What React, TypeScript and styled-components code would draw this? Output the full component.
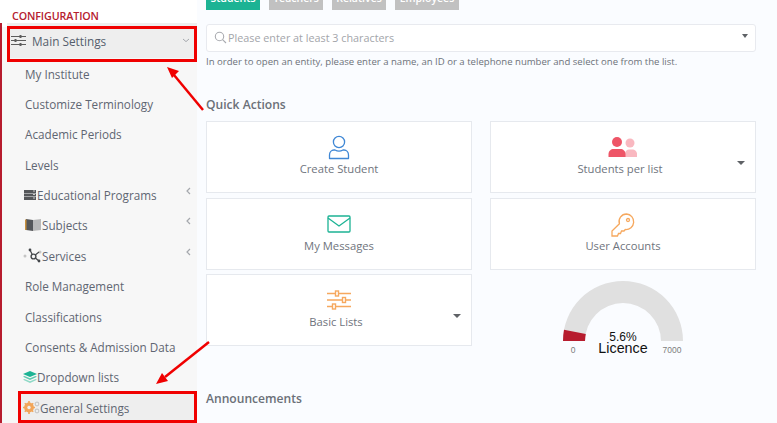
import React from "react";
import styled, { createGlobalStyle } from "styled-components";

const Global = createGlobalStyle`
  html, body { margin: 0; padding: 0; width: 777px; height: 423px; overflow: hidden; background: #fafbff; }
  #root { width: 777px; height: 423px; }
  * { box-sizing: border-box; }
`;

const Page = styled.div`
  position: relative;
  display: flex;
  width: 777px;
  height: 423px;
  overflow: hidden;
  font-family: "Open Sans", sans-serif;
  background: #fafcff;
`;

const Sidebar = styled.aside`
  width: 197px;
  flex: none;
  display: flex;
  flex-direction: column;
  background: linear-gradient(#fff 0, #fff 27px, #f7f7f7 27px);
`;

const SectionTitle = styled.div`
  height: 27px;
  padding: 9px 0 0 12px;
  font-size: 10.7px;
  line-height: 14px;
  font-weight: 600;
  color: #b5202f;
  background: #fff;
  letter-spacing: -0.1px;
`;

const Menu = styled.nav`
  flex: 1;
  border-left: 2px solid #b71c2e;
  display: flex;
  flex-direction: column;
`;

const MainItem = styled.div`
  height: 35px;
  margin-left: 5px;
  display: flex;
  align-items: center;
  padding: 0 7px 0 4px;
  gap: 6px;
  background: #eeeeee;
  color: #555e6c;
  font-size: 11.8px;
`;

const Item = styled.div<{ $indent?: number; $active?: boolean }>`
  height: 30.4px;
  flex: none;
  display: flex;
  align-items: center;
  padding-left: ${(p) => p.$indent ?? 23}px;
  padding-right: 6px;
  font-size: 11.7px;
  color: #5f6672;
  background: ${(p) => (p.$active ? "#eeeeee" : "transparent")};
  margin-left: ${(p) => (p.$active ? 16 : 0)}px;
`;

const Label = styled.span`
  flex: 1;
  white-space: nowrap;
`;

const Chevron = styled.svg`
  flex: none;
  margin-top: -8px;
`;

const Main = styled.main`
  flex: 1;
  padding: 0 21px 0 9px;
  margin-top: -10px;
  display: flex;
  flex-direction: column;
`;

const Tabs = styled.div`
  display: flex;
  height: 20px;
  gap: 9px;
`;

const Tab = styled.div<{ $on?: boolean; $w: number }>`
  width: ${(p) => p.$w}px;
  height: 20px;
  background: ${(p) => (p.$on ? "#1cb394" : "#c1c1c1")};
  color: #fff;
  font-size: 10.5px;
  font-weight: 600;
  text-align: center;
  line-height: 17px;
`;

const SearchBox = styled.div`
  margin-top: 14px;
  height: 28px;
  background: #fff;
  border: 1px solid #e8eaef;
  border-radius: 3px;
  display: flex;
  align-items: center;
  padding: 0 4px 2px 7px;
  gap: 1px;
  font-size: 10.8px;
  color: #a3a5aa;
`;

const Help = styled.div`
  margin-top: 3px;
  font-size: 9.58px;
  line-height: 14px;
  color: #6d727a;
`;

const Heading = styled.h2<{ $top: number }>`
  margin: ${(p) => p.$top}px 0 0;
  font-size: 12.1px;
  line-height: 17px;
  font-weight: 600;
  color: #6b7078;
`;

const Grid = styled.div`
  margin-top: 8px;
  display: grid;
  grid-template-columns: 266px 266px;
  grid-auto-rows: 72px;
  column-gap: 18px;
  row-gap: 4.5px;
`;

const Card = styled.div`
  position: relative;
  background: #fff;
  border: 1px solid #e6e9ee;
  display: flex;
  flex-direction: column;
  align-items: center;
  padding-top: 12px;
  font-size: 11.25px;
  line-height: 15px;
  color: #6f747d;
`;

const IconSlot = styled.div<{ $drop?: number }>`
  height: 26px;
  display: flex;
  align-items: center;
  justify-content: center;
  margin-bottom: 1px;
  padding-top: ${(p) => p.$drop ?? 0}px;
`;

const CardCaption = styled.span<{ $shift?: number }>`
  transform: translateX(${(p) => p.$shift ?? 0}px);
`;

const Caret = styled.span`
  position: absolute;
  right: 10px;
  top: 39px;
  width: 0;
  height: 0;
  border-left: 4px solid transparent;
  border-right: 4px solid transparent;
  border-top: 4px solid #5f6266;
`;

const SearchCaret = styled(Caret)`
  position: static;
  margin-left: auto;
  margin-right: 3px;
  margin-bottom: 3px;
  border-left-width: 3.5px;
  border-right-width: 3.5px;
`;

const GaugeCell = styled.div`
  display: flex;
  justify-content: center;
  position: relative;
  height: 72px;
`;

const RedFrame = styled.div<{ $l: number; $t: number; $w: number; $h: number }>`
  position: absolute;
  left: ${(p) => p.$l}px;
  top: ${(p) => p.$t}px;
  width: ${(p) => p.$w}px;
  height: ${(p) => p.$h}px;
  border: 3px solid #f00000;
  pointer-events: none;
`;

const Overlay = styled.svg`
  position: absolute;
  left: 0;
  top: 0;
  pointer-events: none;
`;

const ChevronLeft = () => (
  <Chevron width="5" height="8" viewBox="0 0 5 8" fill="none" stroke="#a5a8ad" strokeWidth="1.2">
    <path d="M4 1L1 4l3 3" />
  </Chevron>
);

const App = () => (
  <Page>
    <Global />
    <Sidebar>
      <SectionTitle>CONFIGURATION</SectionTitle>
      <Menu>
        <MainItem>
          <svg width="15" height="13" viewBox="0 0 15 13" fill="none" stroke="#5c5c5c" strokeWidth="1">
            <path d="M0 2.5h15M0 6.5h15M0 10.5h15" />
            <path d="M9.5 1v3M4.5 5v3M9.5 9v3" strokeWidth="2" />
          </svg>
          <Label>Main Settings</Label>
          <svg width="8" height="5" viewBox="0 0 8 5" fill="none" stroke="#a5a8ad" strokeWidth="1">
            <path d="M1 1l3 2.6L7 1" />
          </svg>
        </MainItem>
        <Item>My Institute</Item>
        <Item>Customize Terminology</Item>
        <Item>Academic Periods</Item>
        <Item>Levels</Item>
        <Item $indent={21}>
          <svg width="14" height="12" viewBox="0 0 14 12">
            <path d="M1 1h12v3H1zM1 4.5h12v3H1zM1 8h12v3H1z" fill="#55575a" />
            <path d="M10 2h2M10 5.5h2M10 9h2" stroke="#ccc" strokeWidth="1" />
          </svg>
          <Label>Educational Programs</Label>
          <ChevronLeft />
        </Item>
        <Item $indent={22}>
          <svg width="18" height="14" viewBox="0 0 18 14">
            <path d="M2 1l7 1v11l-7-1z" fill="#55575a" />
            <path d="M1 1.5h1.5V12H1z" fill="#c9913e" />
            <path d="M9 2l8-1v11l-8 1z" fill="#b9b9b9" />
          </svg>
          <Label>Subjects</Label>
          <ChevronLeft />
        </Item>
        <Item $indent={21}>
          <svg width="19" height="15" viewBox="0 0 19 15" fill="none">
            <circle cx="2" cy="8" r="1.5" fill="#c5c5c5" />
            <circle cx="17" cy="4" r="1.5" fill="#c5c5c5" />
            <path d="M7 2l3 6 6 5M11 8l5-4" stroke="#44474b" strokeWidth="1.2" />
            <circle cx="7" cy="2" r="1.4" fill="#44474b" />
            <circle cx="10.5" cy="8.5" r="2.4" fill="#f7f7f7" stroke="#44474b" strokeWidth="1.4" />
            <circle cx="16" cy="13" r="1.4" fill="#44474b" />
          </svg>
          <Label>Services</Label>
          <ChevronLeft />
        </Item>
        <Item>Role Management</Item>
        <Item>Classifications</Item>
        <Item>Consents &amp; Admission Data</Item>
        <Item $indent={21}>
          <svg width="14" height="12" viewBox="0 0 14 12">
            <path d="M7 0l7 3-7 3-7-3z" fill="#1cb394" />
            <path d="M1.5 5L7 7.3 12.5 5 14 5.8 7 9 0 5.8z" fill="#5cc8ae" />
            <path d="M1.5 8L7 10.2 12.5 8 14 8.8 7 12 0 8.8z" fill="#8ed9c6" />
          </svg>
          <Label>Dropdown lists</Label>
        </Item>
        <Item $active $indent={5}>
          <svg width="17" height="13" viewBox="0 0 17 13">
            <circle cx="6" cy="6.5" r="3.6" fill="none" stroke="#f2a65a" strokeWidth="2.6" />
            <path d="M6 0v13M0 6.5h12M1.8 2.2l8.4 8.6M10.2 2.2l-8.4 8.6" stroke="#f2a65a" strokeWidth="1.6" />
            <circle cx="6" cy="6.5" r="1.7" fill="#eee" />
            <circle cx="14" cy="3" r="1.8" fill="none" stroke="#c8c8c8" strokeWidth="1.2" />
            <circle cx="14" cy="10" r="1.8" fill="none" stroke="#c8c8c8" strokeWidth="1.2" />
          </svg>
          <Label>General Settings</Label>
        </Item>
      </Menu>
    </Sidebar>

    <Main>
      <Tabs>
        <Tab $on $w={54}>Students</Tab>
        <Tab $w={54}>Teachers</Tab>
        <Tab $w={54}>Relatives</Tab>
        <Tab $w={64}>Employees</Tab>
      </Tabs>
      <SearchBox>
        <svg width="13" height="13" viewBox="0 0 13 13" fill="none" stroke="#a9abb0" strokeWidth="1.1">
          <circle cx="5.5" cy="5.5" r="4.2" />
          <path d="M8.6 8.6L12 12" />
        </svg>
        Please enter at least 3 characters
        <SearchCaret />
      </SearchBox>
      <Help>In order to open an entity, please enter a name, an ID or a telephone number and select one from the list.</Help>
      <Heading $top={27}>Quick Actions</Heading>
      <Grid>
        <Card>
          <IconSlot>
            <svg width="22" height="25" viewBox="0 0 22 25" fill="none" stroke="#3f87d5" strokeWidth="1.3">
              <circle cx="11" cy="7" r="5.6" />
              <path d="M1.500 23.500v-3.500c0-3 2-5 4.500-5h1c2.500 1.400 5.500 1.400 8 0h1c2.500 0 4.500 2 4.500 5v3.500z" strokeLinejoin="round" />
            </svg>
          </IconSlot>
          Create Student
        </Card>
        <Card>
          <IconSlot>
            <svg width="30" height="22" viewBox="0 0 30 22">
              <circle cx="22" cy="7" r="4.500" fill="#f9b8c0" />
              <path d="M17 21v-3c0-3 2-4.500 4-4.500h3c3 0 5 2 5 4.500v3z" fill="#f9b8c0" />
              <circle cx="9" cy="6" r="5" fill="#ee5567" />
              <path d="M0.500 21v-3c0-3 2.500-5 5-5h7c2.500 0 5 2 5 5v3z" fill="#ee5567" />
            </svg>
          </IconSlot>
          <CardCaption $shift={-3}>Students per list</CardCaption>
          <Caret />
        </Card>
        <Card>
          <IconSlot $drop={2}>
            <svg width="24" height="19" viewBox="0 0 24 19" fill="none" stroke="#1cb394" strokeWidth="1.3">
              <rect x="1" y="1" width="22" height="16" rx="1" />
              <path d="M1 3l11 8 11-8" />
            </svg>
          </IconSlot>
          My Messages
        </Card>
        <Card>
          <IconSlot $drop={2}>
            <svg width="24" height="24" viewBox="0 0 24 24" fill="none" stroke="#f6a85e" strokeWidth="1.3">
              <path d="M15.500 1a7.500 7.500 0 0 0-7.100 9.800L1 18v5h5.500l1-2.500h2l1-2.500h2.500l1.300-1.500A7.500 7.500 0 1 0 15.500 1z" />
              <circle cx="17" cy="7" r="1.500" />
            </svg>
          </IconSlot>
          User Accounts
        </Card>
        <Card>
          <IconSlot>
            <svg width="24" height="20" viewBox="0 0 24 20" fill="none" stroke="#f6a85e" strokeWidth="1.4">
              <path d="M0 3.500h24M0 10h24M0 16.500h24" />
              <rect x="8.500" y="1" width="3" height="5" fill="#fff" />
              <rect x="15.500" y="7.500" width="3" height="5" fill="#fff" />
              <rect x="5.500" y="14" width="3" height="5" fill="#fff" />
            </svg>
          </IconSlot>
          <CardCaption $shift={-3}>Basic Lists</CardCaption>
          <Caret />
        </Card>
        <GaugeCell>
          <svg width="140" height="86" viewBox="0 0 140 86">
            <path d="M10 67a60 60 0 0 1 120 0h-22a38 38 0 0 0-76 0z" fill="#e0e0e0" />
            <path d="M10 67a60 60 0 0 1 1-11.200l21.800 4.200a38 38 0 0 0-.8 7z" fill="#b71c2e" />
            <text x="20" y="79" fontFamily="Liberation Sans, sans-serif" fontSize="8.500" fill="#7d7d7d" textAnchor="middle">0</text>
            <text x="119" y="79" fontFamily="Liberation Sans, sans-serif" fontSize="8.500" fill="#7d7d7d" textAnchor="middle">7000</text>
            <text x="70" y="67" fontFamily="Liberation Sans, sans-serif" fontSize="12" fill="#111" textAnchor="middle">5.6%</text>
            <text x="70" y="79" fontFamily="Liberation Sans, sans-serif" fontSize="14.300" fill="#111" textAnchor="middle">Licence</text>
          </svg>
        </GaugeCell>
      </Grid>
      <Heading $top={43.5}>Announcements</Heading>
    </Main>

    <RedFrame $l={7} $t={26} $w={190} $h={36} />
    <RedFrame $l={18} $t={391} $w={179} $h={32} />
    <Overlay width="777" height="423" viewBox="0 0 777 423">
      <path d="M203 110L174 75" stroke="#f00000" strokeWidth="2.500" />
      <path d="M167 67l12 4-7 7z" fill="#f00000" />
      <path d="M209 342L165 377" stroke="#f00000" strokeWidth="2.500" />
      <path d="M156 384l6-11 6 8z" fill="#f00000" />
    </Overlay>
  </Page>
);

export default App;
